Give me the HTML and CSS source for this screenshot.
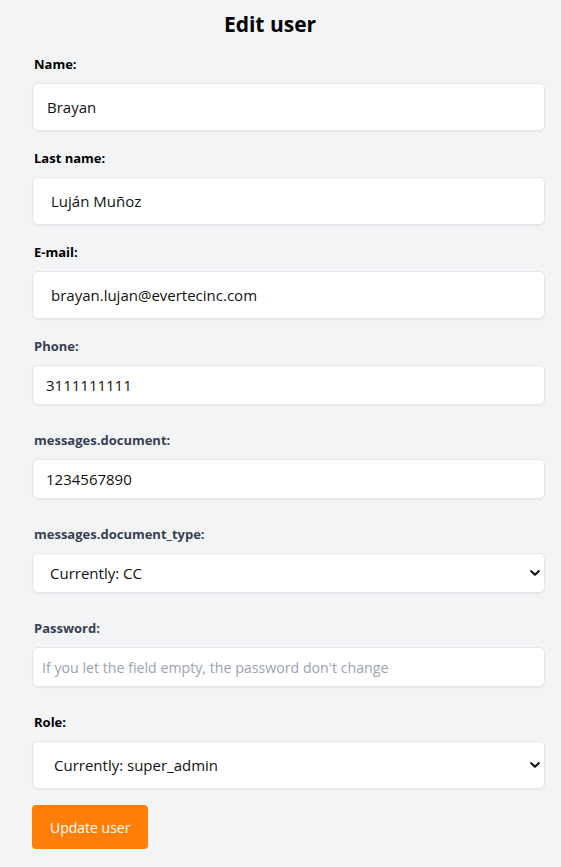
FILE: index.html
```html
<!DOCTYPE html>
<html lang="en">
<head>
<meta charset="utf-8">
<title>Edit user</title>
<link rel="stylesheet" href="styles.css">
</head>
<body>
<main class="page">
  <h1 class="title">Edit user</h1>
  <form class="form">
    <div class="group group-tall">
      <label class="label label-dark" for="name">Name:</label>
      <input class="field field-lg pad-name" id="name" type="text" value="Brayan">
    </div>
    <div class="group group-tall">
      <label class="label label-dark" for="lastname">Last name:</label>
      <input class="field field-lg" id="lastname" type="text" value="Luján Muñoz">
    </div>
    <div class="group group-tall">
      <label class="label label-dark" for="email">E-mail:</label>
      <input class="field field-lg" id="email" type="text" value="brayan.lujan@evertecinc.com">
    </div>
    <div class="group group-short">
      <label class="label label-gray" for="phone">Phone:</label>
      <input class="field field-sm" id="phone" type="text" value="3111111111">
    </div>
    <div class="group group-short">
      <label class="label label-gray" for="document">messages.document:</label>
      <input class="field field-sm" id="document" type="text" value="1234567890">
    </div>
    <div class="group group-short">
      <label class="label label-gray" for="doctype">messages.document_type:</label>
      <div class="select-wrap">
        <select class="field field-sm select select-sm" id="doctype">
          <option>Currently: CC</option>
        </select>
        <svg class="chevron" viewBox="0 0 10 7" width="10" height="7" aria-hidden="true"><path d="M1.2 1.2 L5 4.8 L8.8 1.2" fill="none" stroke="#111" stroke-width="2.1" stroke-linecap="round" stroke-linejoin="round"/></svg>
      </div>
    </div>
    <div class="group group-short">
      <label class="label label-gray" for="password">Password:</label>
      <input class="field field-sm field-pw" id="password" type="password" placeholder="If you let the field empty, the password don't change">
    </div>
    <div class="group group-role">
      <label class="label label-dark" for="role">Role:</label>
      <div class="select-wrap">
        <select class="field field-lg select select-lg" id="role">
          <option>Currently: super_admin</option>
        </select>
        <svg class="chevron" viewBox="0 0 10 7" width="10" height="7" aria-hidden="true"><path d="M1.2 1.2 L5 4.8 L8.8 1.2" fill="none" stroke="#111" stroke-width="2.1" stroke-linecap="round" stroke-linejoin="round"/></svg>
      </div>
    </div>
    <button class="button" type="button">Update user</button>
  </form>
</main>
</body>
</html>
```
FILE: styles.css
```css
* {
  box-sizing: border-box;
}

html, body {
  margin: 0;
  padding: 0;
  background: #f3f4f6;
}

body {
  font-family: "Open Sans", "Noto Sans", sans-serif;
  color: #111827;
}

.page {
  padding: 8px 16px 20px 32px;
}

.title {
  margin: 0 0 14px 0;
  padding-right: 37px;
  text-align: center;
  font-size: 21px;
  line-height: 32px;
  font-weight: 700;
  color: #000;
}

.form {
  display: flex;
  flex-direction: column;
}

.group {
  display: flex;
  flex-direction: column;
}

.group-tall {
  margin-bottom: 17px;
}

.group-short {
  margin-bottom: 25px;
}

.group-role {
  margin-bottom: 16px;
}

.label {
  display: block;
  padding-left: 2px;
  font-size: 13px;
  line-height: 20px;
  font-weight: 700;
  margin-bottom: 9px;
}

.label-dark {
  color: #000;
}

.label-gray {
  color: #374151;
}

.field {
  display: block;
  width: 100%;
  margin: 0;
  background: #fff;
  border: 1px solid #e5e7eb;
  border-radius: 6px;
  box-shadow: 0 1px 2px rgba(0, 0, 0, 0.06);
  font-family: inherit;
  font-size: 15px;
  color: #111;
  outline: none;
}

.field-lg {
  height: 48px;
  padding: 0 18px;
}

.pad-name {
  padding-left: 14px;
}

.field-sm {
  height: 40px;
  padding: 0 13px;
}

.field-pw {
  padding-left: 9px;
  font-size: 14.2px;
}

.field::placeholder {
  color: #9ca3af;
  opacity: 1;
}

.select-wrap {
  position: relative;
}

.select {
  appearance: none;
  -webkit-appearance: none;
}

.select-sm {
  padding-left: 17px;
}

.select-lg {
  padding-left: 21px;
}

.chevron {
  position: absolute;
  right: 5px;
  top: 50%;
  margin-top: -3px;
  pointer-events: none;
}

.button {
  align-self: flex-start;
  height: 44px;
  padding: 0 18px;
  border: none;
  border-radius: 4px;
  background: #ff7f0a;
  color: #fff;
  font-family: inherit;
  font-size: 14px;
}
```
